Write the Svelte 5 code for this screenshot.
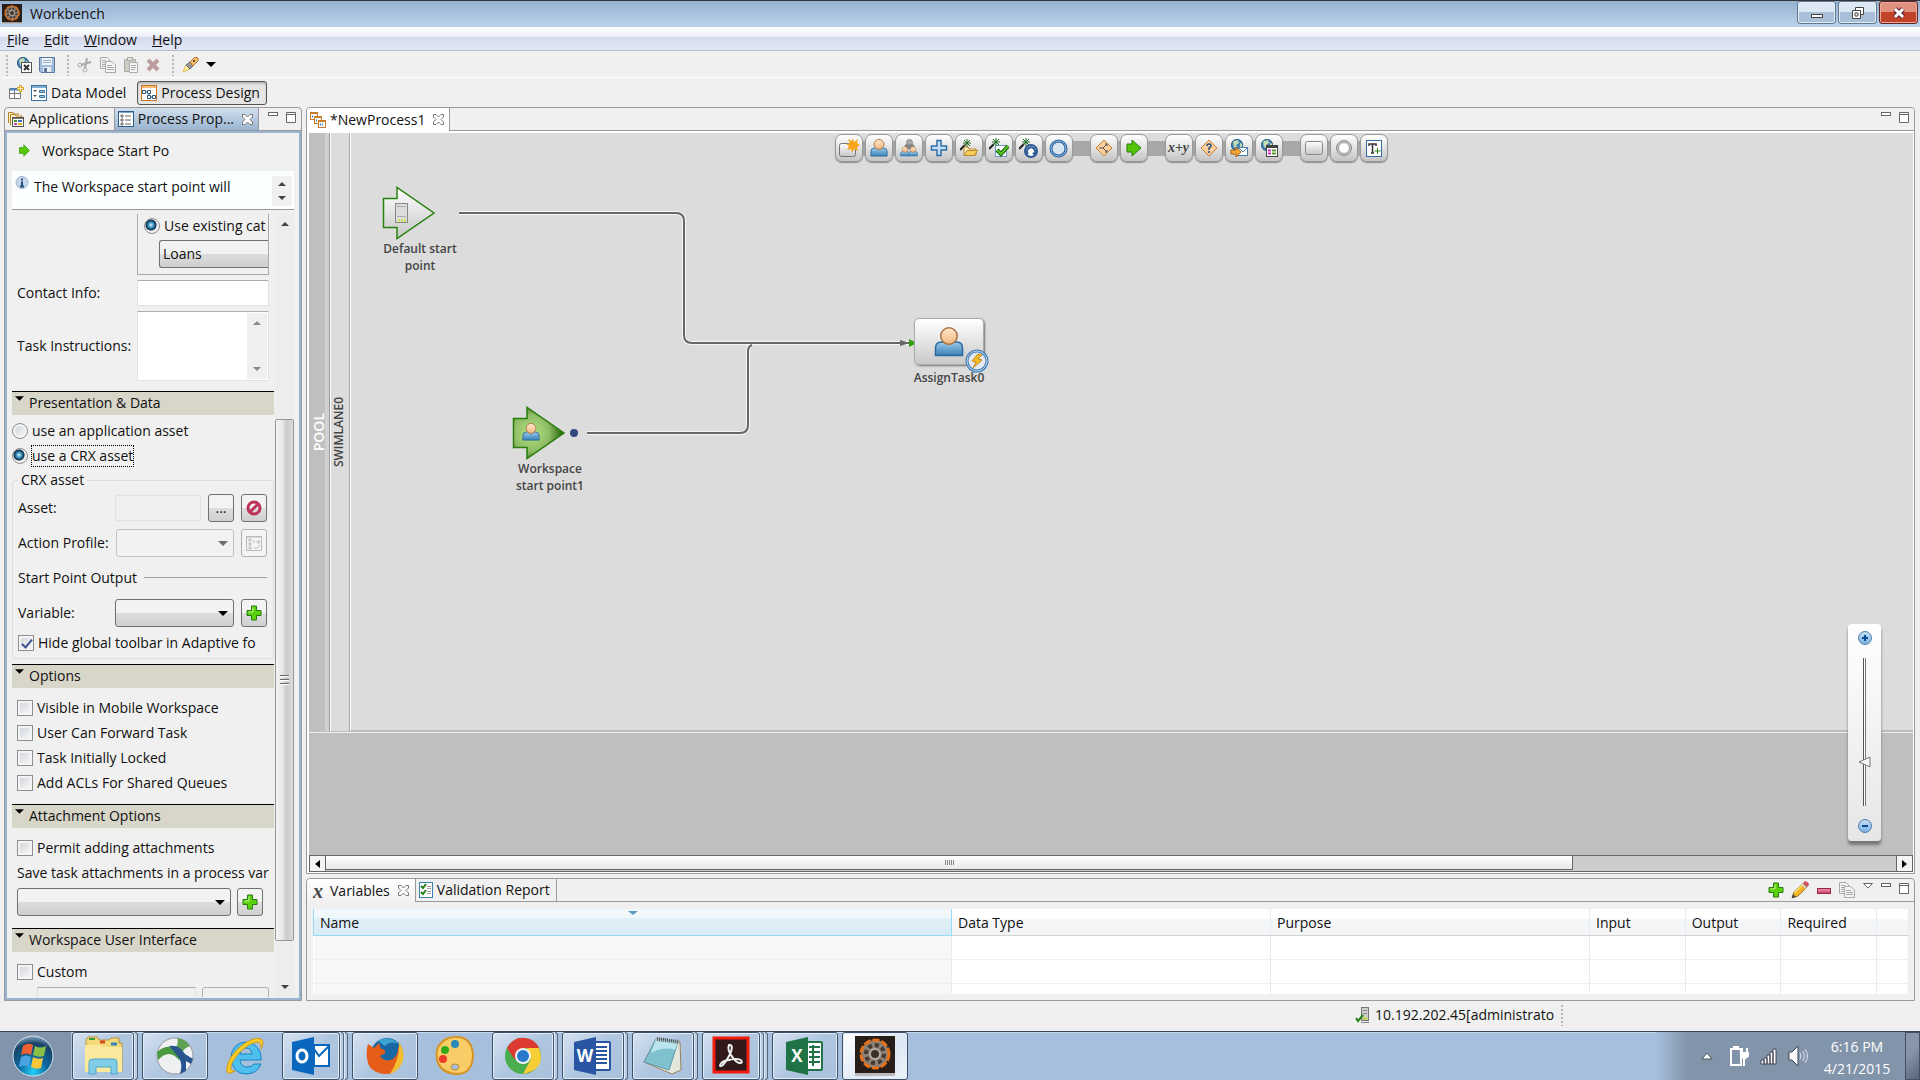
<script lang="ts">
  const menus = ['File', 'Edit', 'Window', 'Help'];

  const palette = [
    ['activity', 'user', 'users', 'plus', 'folder', 'check', 'cycle', 'ring'],
    ['route', 'go'],
    ['formula', 'question', 'globeMail', 'globeForm'],
    ['box', 'circle', 'text']
  ];

  let options = [
    { label: 'Visible in Mobile Workspace', checked: false },
    { label: 'User Can Forward Task', checked: false },
    { label: 'Task Initially Locked', checked: false },
    { label: 'Add ACLs For Shared Queues', checked: false }
  ];

  const columns = ['Name', 'Data Type', 'Purpose', 'Input', 'Output', 'Required', ''];

  const apps = [
    { name: 'Explorer', icon: 'explorer', framed: true, stack: 1 },
    { name: 'Connect', icon: 'connect', framed: true, stack: 0 },
    { name: 'Internet Explorer', icon: 'ie', framed: false, stack: 0 },
    { name: 'Outlook', icon: 'outlook', framed: true, stack: 2 },
    { name: 'Firefox', icon: 'firefox', framed: true, stack: 0 },
    { name: 'Paint', icon: 'paint', framed: false, stack: 0 },
    { name: 'Chrome', icon: 'chrome', framed: true, stack: 1 },
    { name: 'Word', icon: 'word', framed: true, stack: 1 },
    { name: 'Notepad', icon: 'notepad', framed: true, stack: 1 },
    { name: 'Acrobat', icon: 'acrobat', framed: true, stack: 2 },
    { name: 'Excel', icon: 'excel', framed: true, stack: 0 },
    { name: 'Workbench', icon: 'workbench', framed: true, stack: 0, active: true }
  ];

  let assetSource = 'crx';
  let hideToolbar = true;
  let permitAttachments = false;
  let custom = false;
  let contact = '';
  let instructions = '';
  let zoom = 28;
</script>

{#snippet globe()}
  <circle cx="7" cy="6" r="6" fill="#4c86b4" />
  <path d="M3 2 L8 1 L9 4 L6 6 L7 9 L4 8 Z M10 4 L13 5 L12 8 L10 8 Z" fill="#c5dfb4" />
  <circle cx="7" cy="6" r="5.5" fill="none" stroke="#2d608e" />
{/snippet}

{#snippet wand()}
  <path d="M0 11 L5 6" stroke="#222" stroke-width="2" />
  <path d="M7 0 V8 M3 4 H11 M4 1 L10 7 M10 1 L4 7" stroke="#1c6a1c" stroke-width="1" />
{/snippet}

{#snippet person()}
  <path d="M1 19 V14 Q1 10 5 10 H15 Q19 10 19 14 V19 Z" fill="url(#shirt)" stroke="#286a9f" />
  <circle cx="10" cy="6" r="5.5" fill="url(#skin)" stroke="#a97242" />
{/snippet}

{#snippet icon(name: string)}
  {#if name === 'activity'}
    <svg width="22" height="20" viewBox="0 0 22 20"><rect x="1.500" y="5.500" width="16" height="13" rx="2" fill="url(#silver)" stroke="#777" /><path d="M15 0 L16 4 L20 1 L19 5 L22 7 L19 9 L20 13 L16 11 L14 15 L13 11 L9 12 L11 8 L8 6 L12 5 L10 1 L14 3 Z" fill="#f8a51b" /></svg>
  {:else if name === 'user'}
    <svg width="18" height="18" viewBox="0 0 20 20">{@render person()}</svg>
  {:else if name === 'users'}
    <svg width="18" height="18" viewBox="0 0 36 36"><path d="M10 20 V14 Q10 11 14 11 H24 Q28 11 28 14 V20 Z" fill="#888" stroke="#555" /><circle cx="19" cy="7" r="6" fill="#aaa" stroke="#555" /><g transform="translate(0 15)">{@render person()}</g><g transform="translate(16 15)">{@render person()}</g></svg>
  {:else if name === 'plus'}
    <svg width="18" height="18" viewBox="0 0 18 18"><path d="M7 1.500 H11 V7 H16.500 V11 H11 V16.500 H7 V11 H1.500 V7 H7 Z" fill="#c5e0f6" stroke="#2c6fa8" stroke-width="1.500" /></svg>
  {:else if name === 'folder'}
    <svg width="18" height="18" viewBox="0 0 18 18">{@render wand()}<path d="M4 16 V8 H8 L9 10 H16 V16 Z" fill="#fff5c8" stroke="#b9872c" /><path d="M4 16.500 L7 11.500 H17.500 L14.500 16.500 Z" fill="#f8cf5c" stroke="#b9872c" /></svg>
  {:else if name === 'check'}
    <svg width="20" height="20" viewBox="0 0 20 20"><rect x="6.500" y="7.500" width="11" height="11" fill="#fff" stroke="#6e9cc9" />{@render wand()}<path d="M8 12 L12 16 L19 8" fill="none" stroke="#195c12" stroke-width="4" /><path d="M8 12 L12 16 L19 8" fill="none" stroke="#54c522" stroke-width="2" /></svg>
  {:else if name === 'cycle'}
    <svg width="20" height="21" viewBox="0 0 20 21">{@render wand()}<circle cx="12" cy="13" r="6" fill="#fff" stroke="#2a5995" stroke-width="2" /><path d="M9 16 A4 4 0 1 1 15 16" fill="none" stroke="#2a5995" stroke-width="2" /><path d="M13 15 L17 14 L16 18 Z" fill="#2a5995" /></svg>
  {:else if name === 'ring'}
    <svg width="19" height="19" viewBox="0 0 19 19"><circle cx="9.500" cy="9.500" r="7.500" fill="#d9e6f2" stroke="#255f9e" stroke-width="3" /><circle cx="9.500" cy="9.500" r="7.500" fill="none" stroke="#9dc4e9" /></svg>
  {:else if name === 'route'}
    <svg width="18" height="18" viewBox="0 0 18 18"><path d="M9 1 L17 9 L9 17 L1 9 Z" fill="#fbcf9d" stroke="#c9803b" /><path d="M4 9 H8 L12 5 M8 9 L12 13 M10 5 H12 V7 M10 13 H12 V11" fill="none" stroke="#555" /></svg>
  {:else if name === 'go'}
    <svg width="16" height="18" viewBox="0 0 16 18"><path d="M1 5 H6 V1 L15 9 L6 17 V13 H1 Z" fill="#54c40a" stroke="#277f0b" /></svg>
  {:else if name === 'formula'}
    <i class="formula">x+y</i>
  {:else if name === 'question'}
    <svg width="18" height="18" viewBox="0 0 18 18"><path d="M9 1 L17 9 L9 17 L1 9 Z" fill="#fbcf9d" stroke="#c9803b" /><path d="M7 7 Q7 5 9 5 Q11 5 11 7 Q11 8 9 9 V11" fill="none" stroke="#204e7c" stroke-width="1.500" /><circle cx="9" cy="13" r="1" fill="#204e7c" /></svg>
  {:else if name === 'globeMail'}
    <svg width="18" height="18" viewBox="0 0 18 18">{@render globe()}<rect x="8.500" y="8.500" width="9" height="8" fill="#fff" stroke="#4d7fac" /><path d="M9 9 L13 13 L17 9" fill="none" stroke="#4d7fac" /><path d="M1 11 H6 V8 L11 13 L6 18 V15 H1 Z" fill="#f9a63b" stroke="#a85c12" /></svg>
  {:else if name === 'globeForm'}
    <svg width="18" height="18" viewBox="0 0 18 18">{@render globe()}<rect x="6.500" y="6.500" width="11" height="11" fill="#fff" stroke="#444" /><path d="M7 8 H17" stroke="#444" stroke-width="2" /><path d="M8 11.500 H11 M8 14.500 H11" stroke="#c62abb" stroke-width="2" /><path d="M12 11.500 H16 M12 14.500 H16" stroke="#5a9c2c" stroke-width="2" /></svg>
  {:else if name === 'box'}
    <svg width="20" height="16" viewBox="0 0 20 16"><rect x="1.500" y="1.500" width="17" height="13" rx="2" fill="url(#silver)" stroke="#888" /></svg>
  {:else if name === 'circle'}
    <svg width="18" height="18" viewBox="0 0 18 18"><circle cx="9" cy="9" r="7.500" fill="#ccc" stroke="#888" /><circle cx="9" cy="9" r="5.500" fill="#fff" stroke="#999" /></svg>
  {:else if name === 'text'}
    <svg width="18" height="19" viewBox="0 0 18 19"><rect x="1.500" y="1.500" width="15" height="16" fill="#fff" stroke="#346ba3" /><path d="M4 7 V5 H11 V7 M7.500 5 V14 M6 14 H9" fill="none" stroke="#333" stroke-width="1.500" /><path d="M12.500 9 V15 M9.500 12 H15.500" stroke="#288319" /></svg>
  {:else if name === 'add'}
    <svg width="16" height="16" viewBox="0 0 16 16"><path d="M5.500 1 H10.500 V5.500 H15 V10.500 H10.500 V15 H5.500 V10.500 H1 V5.500 H5.500 Z" fill="#5bd00c" stroke="#257b0d" /><path d="M7 2.500 V7 H2.500" fill="none" stroke="#c4f48d" /></svg>
  {:else if name === 'forbid'}
    <svg width="16" height="16" viewBox="0 0 16 16"><circle cx="8" cy="8" r="6" fill="none" stroke="#bf3159" stroke-width="3" /><path d="M4 12 L12 4" stroke="#bf3159" stroke-width="3" /></svg>
  {:else if name === 'profile'}
    <svg width="16" height="16" viewBox="0 0 16 16" fill="none" stroke="#bbb"><path d="M.5 1.500 H15.500 V15.500 H.5 Z M0 2 H16 M3 4 H5 V6 H3 Z M3 8 H5 V10 H3 Z M3 12 H5 V14 H3 Z M8 5 V8 M10 7 H14 M12 5 L14 7 L12 9 M8 12 L10 14 L14 10" /></svg>
  {:else if name === 'pencil'}
    <svg width="18" height="18" viewBox="0 0 18 18"><path d="M1 17 L3 11 L12 2 L16 6 L7 15 Z" fill="#f6b829" stroke="#9b7428" /><path d="M3 11 L12 2 L13 3 L4 12 Z" fill="#ffe87a" /><path d="M12 2 L14 0 Q18 1 18 4 L16 6 Z" fill="#d55460" /><path d="M11 3 L15 7" stroke="#ccc" stroke-width="2" /><path d="M1 17 L2 13 L5 16 Z" fill="#444" /></svg>
  {:else if name === 'minus'}
    <svg width="16" height="16" viewBox="0 0 16 16"><rect x="1.500" y="6.500" width="13" height="5" fill="#d95679" stroke="#95294a" /><path d="M2 8 H14" stroke="#f0a7b8" /></svg>
  {:else if name === 'copy'}
    <svg width="16" height="16" viewBox="0 0 16 16" stroke="#a9a9a9" fill="#f4f4f4"><path d="M.5 .5 H7 L9.500 3 V11.500 H.5 Z M2 3.500 H6 M2 5.500 H7 M2 7.500 H5 M2 9.500 H5" /><path d="M5.500 4.500 H12 L15.500 8 V15.500 H5.500 Z M7 8.500 H12 M7 10.500 H14 M7 12.500 H14" /></svg>
  {:else if name === 'close'}
    <svg width="11" height="11" viewBox="0 0 11 11"><path d="M.5 .5 H3 L5.500 3 L8 .5 H10.500 V3 L8 5.500 L10.500 8 V10.500 H8 L5.500 8 L3 10.500 H.5 V8 L3 5.500 L.5 3 Z" fill="#fff" stroke="#777" /></svg>
  {:else if name === 'min'}
    <svg width="10" height="11" viewBox="0 0 10 11"><rect x=".5" y=".5" width="9" height="3" fill="#fff" stroke="#666" /></svg>
  {:else if name === 'max'}
    <svg width="10" height="11" viewBox="0 0 10 11"><path d="M.5 .5 H9.500 V10.500 H.5 Z M0 2.500 H10" fill="#fff" stroke="#666" /></svg>
  {:else if name === 'viewMenu'}
    <svg width="10" height="11" viewBox="0 0 10 11"><path d="M.5 .5 H9.500 L5 5 Z" fill="#fff" stroke="#666" /></svg>
  {:else if name === 'publish'}
    <svg width="16" height="16" viewBox="0 0 16 16">{@render globe()}<rect x="5.500" y="5.500" width="10" height="10" fill="#fff" stroke="#555" /><path d="M8 8 L13 13 M13 8 L8 13" stroke="#333" stroke-width="2" /></svg>
  {:else if name === 'save'}
    <svg width="16" height="16" viewBox="0 0 16 16"><path d="M.5 .5 H15.500 V15.500 H2 L.5 14 Z" fill="#9fb9d9" stroke="#58799f" /><rect x="3" y="1" width="10" height="7" fill="#edf3fa" /><path d="M4 3.500 H12 M4 5.500 H12" stroke="#9cb2c9" /><rect x="4" y="10" width="8" height="5" fill="#e9eef4" /><rect x="5" y="11" width="3" height="4" fill="#58799f" /></svg>
  {:else if name === 'cut'}
    <svg width="16" height="16" viewBox="0 0 16 16" fill="none" stroke="#aaa"><path d="M10 1 L8 11 M14 5 L4 8" stroke-width="2" /><circle cx="3" cy="8" r="2" /><circle cx="8" cy="13" r="2" /></svg>
  {:else if name === 'paste'}
    <svg width="16" height="16" viewBox="0 0 16 16" stroke="#aaa"><path d="M1.500 2.500 H12.500 V14.500 H1.500 Z" fill="#d2cdc3" /><rect x="4.500" y=".5" width="5" height="3" fill="#e5e5e5" /><path d="M6.500 5.500 H14.500 V15.500 H6.500 Z M8 8.500 H13 M8 10.500 H13 M8 12.500 H12" fill="#f5f5f5" /></svg>
  {:else if name === 'delete'}
    <svg width="14" height="14" viewBox="0 0 14 14"><path d="M2 2 L12 12 M12 2 L2 12" stroke="#bd9ea0" stroke-width="4" /></svg>
  {:else if name === 'torch'}
    <svg width="17" height="16" viewBox="0 0 17 16"><path d="M1 15 L4 8 L8 12 Z" fill="#fff4a0" stroke="#e4b949" /><path d="M4 8 L8 5 L11 9 L8 12 Z" fill="#999" stroke="#667" /><path d="M8 5 L13 0 L16 1 L16 4 L11 9 Z" fill="#f5bd69" stroke="#b27a36" /><circle cx="12" cy="4" r="1" fill="#333" /></svg>
  {:else if name === 'openPerspective'}
    <svg width="15" height="15" viewBox="0 0 15 15"><path d="M.5 3.500 H11.500 V13.500 H.5 Z M5.500 4 V13 M1 8.500 H11" fill="#fff" stroke="#777" /><path d="M1 4.500 H10" stroke="#4788c9" stroke-width="2" /><path d="M11.500 0 V7 M8 3.500 H15" stroke="#dba526" stroke-width="3" /><path d="M11.500 1 V6 M9 3.500 H14" stroke="#fff2b0" /></svg>
  {:else if name === 'dataModel'}
    <svg width="16" height="16" viewBox="0 0 16 16"><rect x=".5" y=".5" width="15" height="15" fill="#fff" stroke="#37719f" /><path d="M1 2 H15" stroke="#80afd2" stroke-width="2" /><path d="M2 5 H6 L4 7 Z M2 10 H6 L4 12 Z" fill="#555" /><path d="M8.500 5.500 H13.500 V7.500 H8.500 Z M8.500 10.500 H13.500 V12.500 H8.500 Z" fill="#a7cbe4" stroke="#34729e" /></svg>
  {:else if name === 'processDesign'}
    <svg width="16" height="16" viewBox="0 0 16 16"><rect x=".5" y=".5" width="15" height="15" fill="#fff" stroke="#c97724" /><path d="M1 2 H15" stroke="#f4bc75" stroke-width="2" /><path d="M1.500 5.500 H4.500 V8.500 H1.500 Z M6.500 5.500 H9.500 V8.500 H6.500 Z M6.500 10.500 H9.500 V13.500 H6.500 Z M11.500 10.500 H14.500 V13.500 H11.500 Z M4 7 H6 M8 9 V10 M10 12 H11" fill="none" stroke="#27577c" /></svg>
  {:else if name === 'applications'}
    <svg width="17" height="16" viewBox="0 0 17 16"><path d="M.5 12 V1.500 H5 L6 3 H11 M2.500 14 V3.500 H7 L8 5 H14 V7" fill="#fff3cc" stroke="#b98222" /><rect x="4.500" y="6.500" width="11" height="9" fill="#fff" stroke="#555" /><path d="M5 7.500 H15" stroke="#777" /><path d="M6 10 H9" stroke="#4c9b1c" stroke-width="2" /><path d="M10 10 H14" stroke="#3a6ec9" stroke-width="2" /><path d="M6 13 H9" stroke="#cb42a4" stroke-width="2" /><path d="M10 13 H14" stroke="#dfb420" stroke-width="2" /></svg>
  {:else if name === 'properties'}
    <svg width="16" height="16" viewBox="0 0 16 16"><rect x=".5" y=".5" width="15" height="15" fill="#fff" stroke="#315f8c" /><path d="M1 1.500 H15" stroke="#83aed1" /><path d="M3 4 H5 V6 H3 Z M3 8 H5 V10 H3 Z M3 12 H5 V14 H3 Z M7 5 H13 M7 9 H13 M7 13 H13" fill="none" stroke="#666" /></svg>
  {:else if name === 'process'}
    <svg width="16" height="16" viewBox="0 0 16 16" fill="#fff" stroke="#c77b26"><rect x=".5" y=".5" width="7" height="7" /><path d="M0 1.500 H8" /><rect x="4.500" y="4.500" width="7" height="7" /><path d="M4 5.500 H12" /><rect x="8.500" y="8.500" width="7" height="7" /><path d="M8 9.500 H16" /><path d="M2 4.500 H4 M6 8.500 H8 M10 12.500 H14" stroke="#3a7bb2" stroke-dasharray="1 1" stroke-width="2" /></svg>
  {:else if name === 'info'}
    <svg width="14" height="14" viewBox="0 0 14 14"><circle cx="7" cy="6.500" r="6" fill="#c6d8ee" stroke="#a4b4c8" /><path d="M7 5.500 V10 M7 2.500 V4.500 M5 10.500 H9" stroke="#25507f" stroke-width="2" /></svg>
  {:else if name === 'validation'}
    <svg width="14" height="16" viewBox="0 0 14 16"><rect x=".5" y=".5" width="13" height="15" fill="#fff" stroke="#3c80ae" /><path d="M2 4 L4 6 L7 2 M2 10 L4 12 L7 8" fill="none" stroke="#237d19" stroke-width="2" /><path d="M8 4.500 H12 M8 6.500 H12 M8 9.500 H12 M8 11.500 H12" stroke="#999" /></svg>
  {:else if name === 'server'}
    <svg width="15" height="16" viewBox="0 0 15 16"><rect x="6.500" y=".5" width="7" height="13" fill="#ccc" stroke="#777" /><path d="M8 3.500 H12 M8 6.500 H12 M6 15.500 H14" stroke="#888" /><path d="M8 11.500 H12" stroke="#b8da23" stroke-width="2" /><path d="M1 11 L3 14 L8 8" fill="none" stroke="#257d17" stroke-width="2" /></svg>
  {:else if name === 'workbench'}
    <svg viewBox="0 0 40 40"><rect width="40" height="37" fill="#281e19" /><rect y="37" width="40" height="3" fill="#bbb" /><circle cx="20" cy="18" r="14" fill="#8b8077" stroke="#e77018" stroke-width="3" stroke-dasharray="7 2" /><circle cx="20" cy="18" r="9" fill="none" stroke="#483a31" stroke-width="4" stroke-dasharray="4 3" /><circle cx="20" cy="18" r="5" fill="#393029" stroke="#b5aaa1" stroke-width="2" /></svg>
  {:else if name === 'explorer'}
    <svg viewBox="0 0 40 40"><path d="M3 35 V4 L5 1 H14 L16 4 H26 L28 2 H36 V7 H39 V35 Z" fill="#f4d979" stroke="#b9913d" /><path d="M6 3 H12" stroke="#399b38" stroke-width="2" /><path d="M17 6 H22" stroke="#d74525" stroke-width="3" /><path d="M28 8 H34" stroke="#3182c2" stroke-width="3" /><path d="M2 9 H17 L20 11 H39 V36 H2 Z" fill="#fbe99d" /><path d="M6 38 V26 Q6 23 10 23 H31 Q34 23 34 26 V38 H28 V31 H13 V38 Z" fill="#83cce6" stroke="#4ba6cc" /></svg>
  {:else if name === 'connect'}
    <svg viewBox="0 0 40 40"><circle cx="20" cy="20" r="18" fill="#eff0f1" stroke="#999" /><path d="M2 16 Q11 8 20 12 L28 20 L24 24 Q14 12 3 24 Z" fill="#4b9a40" /><path d="M22 2 Q31 3 35 10 Q29 12 27 17 L21 11 Q24 7 22 2 Z" fill="#5ea353" /><path d="M14 10 Q24 8 30 18 L38 23 L36 28 L31 25 V35 L25 38 Q28 28 24 22 Q18 14 14 10 Z" fill="#28548f" /></svg>
  {:else if name === 'ie'}
    <svg viewBox="0 0 40 40"><path d="M6 21 A14 14 0 0 1 36 21 V24 H15 Q16 31 22 31 Q27 31 29 28 H36 Q32 38 21 38 Q7 38 6 21 Z M15 18 H27 Q26 12 21 12 Q16 12 15 18 Z" fill="#4fc0ee" fill-rule="evenodd" stroke="#1684c1" /><path d="M10 35 Q0 41 2 31 Q4 20 16 10 Q29 0 36 3 Q40 5 36 13 Q37 6 32 6 Q24 7 14 17 Q4 29 6 33 Q7 36 10 35 Z" fill="#f7cc28" stroke="#d59816" /></svg>
  {:else if name === 'outlook'}
    <svg viewBox="0 0 40 40"><path d="M1 6 L23 1 V39 L1 34 Z" fill="#0968bd" /><ellipse cx="11" cy="20" rx="5" ry="6" fill="none" stroke="#fff" stroke-width="3" /><rect x="23" y="9" width="15" height="21" fill="#fff" stroke="#0968bd" stroke-width="2" /><path d="M23 13 L28 20 L38 10" fill="none" stroke="#0968bd" stroke-width="2" /></svg>
  {:else if name === 'firefox'}
    <svg viewBox="0 0 40 40"><circle cx="22" cy="18" r="16" fill="#1767a5" /><path d="M13 5 Q23 -1 34 8 Q25 4 20 10 Z" fill="#3fa4d2" /><path d="M3 8 L9 12 L14 7 L16 13 Q21 13 20 17 L15 20 Q20 27 28 23 Q34 18 33 10 L35 15 L34 6 Q41 18 36 28 Q30 39 19 38 Q3 36 2 22 Q1 14 3 8 Z" fill="#e55d17" /><path d="M34 6 Q42 19 36 29 Q31 36 25 38 Q35 23 34 6 Z" fill="#f4be34" /></svg>
  {:else if name === 'paint'}
    <svg viewBox="0 0 40 40"><path d="M20 1 Q36 0 38 18 Q38 37 23 38 Q8 38 3 27 Q0 18 3 11 Q9 1 20 1 Z" fill="#f8cc67" stroke="#d69426" stroke-width="2" /><ellipse cx="20" cy="31" rx="4" ry="3" fill="#a6bfdc" stroke="#c58b28" /><circle cx="10" cy="14" r="4" fill="#37a91b" /><circle cx="20" cy="8" r="4" fill="#268aba" /><circle cx="8" cy="23" r="4" fill="#ed3b28" /></svg>
  {:else if name === 'chrome'}
    <svg viewBox="0 0 40 40"><circle cx="20" cy="20" r="18" fill="#4aae4f" /><path d="M4 12 Q11 0 22 2 Q32 3 36 12 H20 L12 24 Z" fill="#dd3a32" /><path d="M36 12 Q44 33 20 38 L28 23 L24 12 Z" fill="#f7ce35" /><circle cx="20" cy="20" r="8" fill="#f3f3f3" /><circle cx="20" cy="20" r="6" fill="#2879cb" /></svg>
  {:else if name === 'word' || name === 'excel'}
    <svg viewBox="0 0 40 40"><rect x="20" y="6" width="17" height="28" rx="1" fill="#fff" stroke={name === 'word' ? '#2955a3' : '#207347'} stroke-width="2" /><path d={name === 'word' ? 'M22 11 H34 M22 15 H34 M22 19 H34 M22 23 H34 M22 27 H34' : 'M24 11 H35 M24 16 H35 M24 21 H35 M24 26 H35 M28 9 V30'} stroke={name === 'word' ? '#2955a3' : '#207347'} stroke-width="2" /><path d="M1 6 L23 1 V39 L1 34 Z" fill={name === 'word' ? '#2955a3' : '#207347'} /><text x="12" y="26" text-anchor="middle" fill="#fff" font-size="17" font-weight="700">{name === 'word' ? 'W' : 'X'}</text></svg>
  {:else if name === 'notepad'}
    <svg viewBox="0 0 40 40"><path d="M13 3 L37 6 L38 34 L29 38 L1 26 Z" fill="#e5e7dc" stroke="#96825c" /><path d="M13 3 L35 6 L26 34 L1 26 Z" fill="#7fc1cf" stroke="#5b9aa9" /><path d="M13 3 L35 6 L32 14 Q21 10 8 17 Z" fill="#bbe5ee" /><path d="M14 3 L36 6" stroke="#555" stroke-width="4" stroke-dasharray="1 1" /></svg>
  {:else if name === 'acrobat'}
    <svg viewBox="0 0 40 40"><rect x="3" y="2" width="34" height="34" fill="#31191a" stroke="#f21b0c" stroke-width="3" /><path d="M18 9 C24 8 20 19 12 29 C7 33 8 25 18 24 C28 21 33 25 30 27 C25 28 15 15 18 9 Z" fill="none" stroke="#eee" stroke-width="2" /></svg>
  {/if}
{/snippet}

{#snippet section(title: string)}
  <h2 class="section"><svg width="10" height="6" viewBox="0 0 10 6"><path d="M0 0 H10 L5 5 Z" /></svg>{title}</h2>
{/snippet}

<svelte:head><title>Workbench</title></svelte:head>

<svg class="defs" width="0" height="0" aria-hidden="true">
  <defs>
    <linearGradient id="shirt" x2="0" y2="1"><stop stop-color="#9dc9e8" /><stop offset="1" stop-color="#3981b8" /></linearGradient>
    <linearGradient id="skin" x2="0" y2="1"><stop stop-color="#ffe7c9" /><stop offset="1" stop-color="#f0b781" /></linearGradient>
    <linearGradient id="silver" x2="0" y2="1"><stop stop-color="#fff" /><stop offset="1" stop-color="#c6c6c6" /></linearGradient>
    <radialGradient id="green" cx=".35" cy=".5" r=".6"><stop stop-color="#b5e77e" /><stop offset=".6" stop-color="#8ebb66" /><stop offset="1" stop-color="#2e6b0e" /></radialGradient>
    <radialGradient id="orb" cx=".5" cy=".9" r=".9"><stop stop-color="#22d1fa" /><stop offset=".4" stop-color="#0f68a0" /><stop offset=".8" stop-color="#174366" /><stop offset="1" stop-color="#8eadc7" /></radialGradient>
  </defs>
</svg>

<div class="screen">
  <header class="titlebar">
    <span class="app-icon">{@render icon('workbench')}</span>
    <h1>Workbench</h1>
    <div class="window-buttons">
      <button aria-label="Minimize"><svg width="16" height="14" viewBox="0 0 16 14"><rect x="2.500" y="8.500" width="11" height="3" fill="#fff" stroke="#444" /></svg></button>
      <button aria-label="Restore"><svg width="16" height="14" viewBox="0 0 16 14" fill="#fff" stroke="#444"><path d="M5.500 1.500 H13.500 V8.500 H5.500 Z" /><path d="M2.500 4.500 H10.500 V12.500 H2.500 Z M5 7 H8 V10 H5 Z" /></svg></button>
      <button class="quit" aria-label="Close"><svg width="16" height="14" viewBox="0 0 16 14"><path d="M4 3 L12 11 M12 3 L4 11" stroke="#523" stroke-width="5" /><path d="M4 3 L12 11 M12 3 L4 11" stroke="#fff" stroke-width="3" /></svg></button>
    </div>
  </header>

  <nav class="menubar">
    {#each menus as menu}
      <button><u>{menu[0]}</u>{menu.slice(1)}</button>
    {/each}
  </nav>

  <div class="toolbar">
    <span class="handle"></span>
    <button aria-label="Logout">{@render icon('publish')}</button>
    <button aria-label="Save">{@render icon('save')}</button>
    <span class="handle"></span>
    <button aria-label="Cut">{@render icon('cut')}</button>
    <button aria-label="Copy">{@render icon('copy')}</button>
    <button aria-label="Paste">{@render icon('paste')}</button>
    <button aria-label="Delete">{@render icon('delete')}</button>
    <span class="handle"></span>
    <button aria-label="Search">{@render icon('torch')}</button>
    <button class="drop" aria-label="Search options"><svg width="10" height="6" viewBox="0 0 10 6"><path d="M0 0 H10 L5 5 Z" /></svg></button>
  </div>

  <div class="perspectives">
    <button aria-label="Open perspective">{@render icon('openPerspective')}</button>
    <button>{@render icon('dataModel')}Data Model</button>
    <button class="active">{@render icon('processDesign')}Process Design</button>
  </div>

  <main>
    <aside class="panel properties">
      <div class="tabs">
        <button class="tab">{@render icon('applications')}Applications</button>
        <button class="tab focused">{@render icon('properties')}Process Prop...<span class="close">{@render icon('close')}</span></button>
        <span class="view-buttons">{@render icon('min')}{@render icon('max')}</span>
      </div>
      <div class="body">
        <div class="heading">
          <svg width="13" height="13" viewBox="0 0 16 18"><path d="M1 5 H7 V1 L15 9 L7 17 V13 H1 Z" fill="#56c80a" stroke="#3e9a18" /></svg>
          <span>Workspace Start Po</span>
        </div>
        <div class="hint">
          {@render icon('info')}
          <p>The Workspace start point will</p>
          <span class="spin"><i class="up"></i><i class="down"></i></span>
        </div>
        <div class="scroller">
          <form class="form">
            <div class="category">
              <label><input type="radio" checked />Use existing cat</label>
              <select aria-label="Category"><option>Loans</option></select>
            </div>
            <div class="row contact">
              <label for="contact">Contact Info:</label>
              <input id="contact" type="text" bind:value={contact} />
            </div>
            <div class="row instructions">
              <label for="instructions">Task Instructions:</label>
              <div class="area">
                <textarea id="instructions" bind:value={instructions}></textarea>
                <span class="spin tall"><i class="up"></i><i class="down"></i></span>
              </div>
            </div>

            {@render section('Presentation & Data')}
            <div class="radios">
              <label><input type="radio" bind:group={assetSource} value="app" /><span>use an application asset</span></label>
              <label><input type="radio" bind:group={assetSource} value="crx" /><span class="focus">use a CRX asset</span></label>
            </div>
            <fieldset>
              <legend>CRX asset</legend>
              <div class="field">
                <label for="asset">Asset:</label>
                <input id="asset" type="text" disabled />
                <button type="button">...</button>
                <button type="button" aria-label="Clear asset">{@render icon('forbid')}</button>
              </div>
              <div class="field">
                <label for="profile">Action Profile:</label>
                <span class="pick off"><select id="profile" disabled></select></span>
                <button type="button" disabled aria-label="Edit profile">{@render icon('profile')}</button>
              </div>
              <div class="field divider"><span>Start Point Output</span><hr /></div>
              <div class="field">
                <label for="variable">Variable:</label>
                <span class="pick"><select id="variable"></select></span>
                <button type="button" aria-label="New variable">{@render icon('add')}</button>
              </div>
              <label class="check"><input type="checkbox" bind:checked={hideToolbar} />Hide global toolbar in Adaptive fo</label>
            </fieldset>

            {@render section('Options')}
            <div class="checks">
              {#each options as option}
                <label class="check"><input type="checkbox" bind:checked={option.checked} />{option.label}</label>
              {/each}
            </div>

            {@render section('Attachment Options')}
            <div class="checks attachments">
              <label class="check"><input type="checkbox" bind:checked={permitAttachments} />Permit adding attachments</label>
              <label class="save" for="save">Save task attachments in a process var</label>
              <div class="save-row">
                <span class="pick"><select id="save"></select></span>
                <button type="button" aria-label="New attachment variable">{@render icon('add')}</button>
              </div>
            </div>

            {@render section('Workspace User Interface')}
            <div class="checks">
              <label class="check"><input type="checkbox" bind:checked={custom} />Custom</label>
              <div class="custom-row">
                <input type="text" aria-label="Custom interface" disabled />
                <button type="button" disabled aria-label="Browse"></button>
              </div>
            </div>
          </form>
          <div class="vbar"><i class="up"></i><div class="thumb"><span></span></div><i class="down"></i></div>
        </div>
      </div>
    </aside>

    <div class="right">
      <section class="panel editor">
        <div class="tabs">
          <button class="tab selected">{@render icon('process')}*NewProcess1<span class="close">{@render icon('close')}</span></button>
          <span class="view-buttons">{@render icon('min')}{@render icon('max')}</span>
        </div>
        <div class="canvas">
          <div class="pool">
            <div class="pool-name"><span>POOL</span></div>
            <div class="lane-name"><span>SWIMLANE0</span></div>
            <div class="lane"></div>
          </div>

          <svg class="wires" width="640" height="340" viewBox="0 0 640 340" fill="none">
            <g stroke="#f6f6f6" stroke-width="4">
              <path d="M278 300 H431 Q439 300 439 292 V219 Q439 210 446 210" />
              <path d="M150 80 H367 Q375 80 375 88 V202 Q375 210 383 210 H600" />
            </g>
            <g stroke="#666" stroke-width="2">
              <path d="M278 300 H431 Q439 300 439 292 V219 Q439 213 443 212" />
              <path d="M150 80 H367 Q375 80 375 88 V202 Q375 210 383 210 H600" />
            </g>
            <path d="M591 207 L601 210 L591 213 Z" fill="#666" />
            <path d="M600 206 L608 210 L600 214 Z" fill="#2fa00c" />
            <circle cx="265" cy="300" r="4" fill="#35497f" />
          </svg>

          <div class="node start">
            <svg width="54" height="54" viewBox="0 0 54 54"><path d="M1.500 12.500 H15 V1.500 L52 27 L15 52.500 V41.500 H1.500 Z" fill="url(#silver)" stroke="#27820c" stroke-width="1.500" /><rect x="13.500" y="17.500" width="12" height="19" fill="#ddd" stroke="#888" /><path d="M15 20.500 H24 M15 30.500 H24" stroke="#aaa" /><path d="M16 34.500 H24" stroke="#c5e32a" stroke-width="2" stroke-dasharray="2 1" /></svg>
            <span>Default start point</span>
          </div>
          <div class="node workspace">
            <svg width="54" height="54" viewBox="0 0 54 54"><path d="M1.500 12.500 H15 V1.500 L52 27 L15 52.500 V41.500 H1.500 Z" fill="url(#green)" stroke="#297d0c" stroke-width="1.500" /><g transform="translate(10 17) scale(.9)">{@render person()}</g></svg>
            <span>Workspace start point1</span>
          </div>
          <div class="node assign">
            <div class="task"><svg width="30" height="30" viewBox="0 0 20 20">{@render person()}</svg></div>
            <svg class="badge" width="24" height="24" viewBox="0 0 24 24"><circle cx="12" cy="12" r="10" fill="#e4e9ee" stroke="#467eb4" stroke-width="3" /><circle cx="12" cy="12" r="10" fill="none" stroke="#b4d4ef" /><path d="M13 5 L7 12 L11 13 L8 19 L17 11 L13 10 L17 6 Z" fill="#f5bd24" stroke="#c9861c" /></svg>
            <span>AssignTask0</span>
          </div>

          <div class="palette">
            {#each palette as group}
              <div class="group">
                {#each group as tool}
                  <button aria-label={tool}>{@render icon(tool)}</button>
                {/each}
              </div>
            {/each}
          </div>

          <div class="zoom">
            <button aria-label="Zoom in"><svg width="10" height="10" viewBox="0 0 10 10"><path d="M5 2 V8 M2 5 H8" stroke="#074a98" stroke-width="2" /></svg></button>
            <input type="range" aria-label="Zoom" bind:value={zoom} />
            <button aria-label="Zoom out"><svg width="10" height="10" viewBox="0 0 10 10"><path d="M2 5 H8" stroke="#074a98" stroke-width="2" /></svg></button>
          </div>
        </div>
        <div class="hbar">
          <button aria-label="Scroll left"><svg width="5" height="8" viewBox="0 0 5 8"><path d="M5 0 V8 L0 4 Z" /></svg></button>
          <div class="track"><div class="thumb"><span></span></div></div>
          <button aria-label="Scroll right"><svg width="5" height="8" viewBox="0 0 5 8"><path d="M0 0 V8 L5 4 Z" /></svg></button>
        </div>
      </section>

      <section class="panel variables">
        <div class="tabs">
          <button class="tab selected"><i class="x">x</i>Variables<span class="close">{@render icon('close')}</span></button>
          <button class="tab">{@render icon('validation')}Validation Report</button>
          <div class="actions">
            <button aria-label="Add variable">{@render icon('add')}</button>
            <button aria-label="Edit variable">{@render icon('pencil')}</button>
            <button aria-label="Remove variable">{@render icon('minus')}</button>
            <button aria-label="Copy variable">{@render icon('copy')}</button>
          </div>
          <span class="view-buttons">{@render icon('viewMenu')}{@render icon('min')}{@render icon('max')}</span>
        </div>
        <div class="grid">
          <table>
            <thead>
              <tr>
                {#each columns as column}
                  <th>{column}</th>
                {/each}
              </tr>
            </thead>
            <tbody>
              {#each [0, 1, 2] as _}
                <tr>
                  {#each columns as _column}
                    <td></td>
                  {/each}
                </tr>
              {/each}
            </tbody>
          </table>
        </div>
      </section>
    </div>
  </main>

  <footer class="status">
    {@render icon('server')}
    <span class="host">10.192.202.45[administrato</span>
    <span class="handle"></span>
  </footer>

  <div class="taskbar">
    <button class="start-button" aria-label="Start">
      <svg width="44" height="44" viewBox="0 0 44 44"><circle cx="22" cy="22" r="20" fill="url(#orb)" stroke="#d3e3ee" stroke-width="1" /><path d="M12 12 Q17 8 22 11 L20 21 Q15 18 10 21 Z" fill="#ed6230" /><path d="M24 12 Q29 15 35 12 L33 22 Q27 24 22 21 Z" fill="#8ac249" /><path d="M10 23 Q15 20 20 23 L18 33 Q13 30 8 33 Z" fill="#4ba4e0" /><path d="M22 23 Q27 26 32 24 L30 34 Q25 36 20 33 Z" fill="#fac63b" /></svg>
    </button>
    <div class="apps">
      {#each apps as app}
        <div class="app" class:framed={app.framed} class:active={app.active}>
          <button aria-label={app.name}>{@render icon(app.icon)}</button>
          {#each Array(app.stack) as _}
            <span class="edge"></span>
          {/each}
        </div>
      {/each}
    </div>
    <div class="tray">
      <svg class="more" width="12" height="8" viewBox="0 0 12 8"><path d="M1 7 L6 1 L11 7 Z" fill="#fff" stroke="#455" /></svg>
      <svg width="22" height="22" viewBox="0 0 22 22" fill="#8294aa" stroke="#fff" stroke-width="2"><path d="M5 2 H11 M3 4 H13 V20 H3 Z" /><path d="M14 3 V8 M19 3 V8" /><path d="M13 8 H20 V11 L16 14 Z" fill="#fff" /><path d="M16 13 V21" /></svg>
      <svg width="18" height="18" viewBox="0 0 18 18" fill="#fff" stroke="#445" stroke-width="1"><path d="M1 13 H4 V17 H1 Z M4 11 H7 V17 H4 Z M7 8 H10 V17 H7 Z M10 5 H13 V17 H10 Z M13 2 H16 V17 H13 Z" /></svg>
      <svg width="21" height="22" viewBox="0 0 21 22"><path d="M1 7 H4 L10 1 V21 L4 15 H1 Z" fill="#fff" stroke="#445" /><path d="M12 8 Q14 11 12 14 M15 6 Q18 11 15 16 M17 4 Q22 11 17 18" fill="none" stroke="#dde5ee" /></svg>
      <time><span>6:16 PM</span><span>4/21/2015</span></time>
      <button class="peek" aria-label="Show desktop"></button>
    </div>
  </div>
</div>

<style>
  :global(body) {
    margin: 0;
    overflow: hidden;
  }

  .screen, .screen * {
    box-sizing: border-box;
  }

  .screen {
    display: flex;
    flex-direction: column;
    height: 100vh;
    background: #f0f0f0;
    color: #111;
    font: 14px/20px "Open Sans", "Noto Sans", sans-serif;
  }

  .defs {
    position: absolute;
  }

  svg {
    display: block;
    flex: none;
  }

  button, input, select, textarea {
    margin: 0;
    padding: 0;
    font: inherit;
    color: inherit;
  }

  button {
    border: 0;
    background: none;
    display: flex;
    align-items: center;
    justify-content: center;
  }

  .titlebar {
    display: flex;
    align-items: center;
    height: 27px;
    border-top: 1px solid #333;
    background: linear-gradient(#96b2d1, #bbd2ea);
  }

  .app-icon {
    width: 20px;
    margin: 0 8px 0 2px;
  }

  .app-icon :global(svg) {
    width: 20px;
    height: 20px;
  }

  h1 {
    flex: 1;
    margin: 0;
    font-size: 14px;
    font-weight: 400;
  }

  .window-buttons {
    display: flex;
    align-self: flex-start;
    gap: 2px;
    padding-right: 2px;
  }

  .window-buttons button {
    width: 39px;
    height: 23px;
    border: 1px solid #62788f;
    border-radius: 3px;
    background: linear-gradient(#dbe7f3 50%, #a9c0d8 50%);
    box-shadow: inset 0 0 0 1px #e3edf6;
  }

  .window-buttons .quit {
    border-color: #61231d;
    background: linear-gradient(#e0917f 50%, #c14328 50%);
    box-shadow: inset 0 0 0 1px #e8aa9c;
  }

  .menubar {
    display: flex;
    height: 24px;
    padding: 2px 0 0 7px;
    gap: 15px;
    border-bottom: 1px solid #b6bccc;
    background: linear-gradient(#fff, #eef1f9 40%, #d5dbed 45%, #e2e7f5);
  }

  .toolbar {
    display: flex;
    align-items: center;
    gap: 7px;
    height: 27px;
    margin-left: 2px;
    padding: 2px 0 0 4px;
    border-bottom: 1px solid #fff;
  }

  .toolbar .handle {
    margin-right: 1px;
  }

  .toolbar button + .handle {
    margin-left: 5px;
  }

  .handle {
    width: 2px;
    height: 21px;
    background: repeating-linear-gradient(#b5b5b5 0 2px, transparent 2px 4px);
  }

  .perspectives {
    display: flex;
    align-items: center;
    height: 29px;
    padding: 0 0 0 9px;
    gap: 7px;
  }

  .perspectives button {
    gap: 4px;
    height: 24px;
  }

  .perspectives .active {
    margin-left: 4px;
    padding: 0 6px 0 3px;
    border: 1px solid #555;
    border-radius: 3px;
    background: #e5e5e5;
    box-shadow: inset 0 2px 2px #bbb;
  }

  main {
    flex: 1;
    min-height: 0;
    display: flex;
    gap: 4px;
    padding: 0 5px 0 4px;
  }

  .panel {
    display: flex;
    flex-direction: column;
    border: 1px solid #9a9a9a;
    border-radius: 4px 4px 0 0;
  }

  .properties {
    width: 298px;
    flex: none;
  }

  .right {
    flex: 1;
    min-width: 0;
    display: flex;
    flex-direction: column;
    gap: 4px;
  }

  .tabs {
    display: flex;
    flex: none;
    height: 23px;
    border-bottom: 1px solid #9a9a9a;
  }

  .tab {
    height: 22px;
    gap: 4px;
    padding: 0 5px 0 3px;
    border-right: 1px solid #9a9a9a;
    white-space: nowrap;
  }

  .tab.focused {
    background: linear-gradient(#d3dfed, #99b4d1);
  }

  .tab.selected {
    height: 23px;
    background: #fff;
    border-radius: 4px 0 0 0;
  }

  .tab .close {
    margin-left: 4px;
  }

  .tab .x {
    width: 16px;
    font: italic bold 20px/20px "Liberation Serif", serif;
    color: #444;
  }

  .view-buttons {
    display: flex;
    gap: 8px;
    margin-left: auto;
    padding: 4px 5px 0 0;
  }

  .body {
    flex: 1;
    min-height: 0;
    display: flex;
    flex-direction: column;
    padding: 2px 5px 1px;
    border: 2px solid #99b4d1;
  }

  .heading {
    display: flex;
    align-items: center;
    gap: 11px;
    height: 36px;
    padding: 0 0 5px 6px;
  }

  .heading span {
    width: 130px;
    white-space: nowrap;
  }

  .hint {
    display: flex;
    flex: none;
    height: 39px;
    padding: 5px 2px 0 3px;
    gap: 5px;
    background: #fbffff;
    border-bottom: 1px solid #999;
    margin-bottom: 4px;
  }

  .hint p {
    flex: 1;
    margin: 1px 0 0;
  }

  .spin {
    display: flex;
    flex-direction: column;
    justify-content: space-between;
    align-items: center;
    width: 20px;
    height: 30px;
    padding: 6px 0;
    background: #f0f0f0;
  }

  .up, .down {
    width: 0;
    border: solid transparent;
    border-width: 0 4px;
  }

  .up {
    border-bottom: 4px solid #444;
  }

  .down {
    border-top: 4px solid #444;
  }

  .scroller {
    flex: 1;
    min-height: 0;
    display: flex;
    overflow: hidden;
  }

  .form {
    width: 262px;
    flex: none;
    height: 100%;
    overflow: hidden;
  }

  label {
    white-space: nowrap;
  }

  input[type="radio"], input[type="checkbox"] {
    appearance: none;
    flex: none;
    width: 16px;
    height: 16px;
    border: 1px solid #8e8f8f;
    background: linear-gradient(135deg, #cdd2d8, #fbfbfb);
    box-shadow: inset 0 0 0 2px #f4f4f4;
  }

  input[type="radio"] {
    border-radius: 50%;
  }

  input[type="radio"]:checked {
    background: radial-gradient(circle at 6px 6px, #d4f4ff 0, #2c86b0 3px, #0b2b49 5px, #eee 6px);
    box-shadow: none;
  }

  input[type="checkbox"]:checked {
    position: relative;
  }

  input[type="checkbox"]:checked::after {
    content: "";
    position: absolute;
    left: 5px;
    top: 1px;
    width: 4px;
    height: 9px;
    border: solid #3f5695;
    border-width: 0 2px 2px 0;
    transform: rotate(40deg);
  }

  input[type="text"], textarea {
    min-width: 0;
    height: 26px;
    border: 1px solid #e2e3ea;
    border-top-color: #abadb3;
    background: #fff;
    border-radius: 1px;
  }

  input[type="text"]:disabled {
    background: #f0f0f0;
    border-color: #dde1ea;
  }

  select {
    appearance: none;
    width: 100%;
    height: 28px;
    padding-left: 4px;
    border: 1px solid #707070;
    border-radius: 3px;
    background: linear-gradient(#f2f2f2 50%, #dcdcdc 50%, #cfcfcf);
  }

  select:disabled {
    border-color: #adb2b5;
    background: #f4f4f4;
  }

  .category {
    height: 61px;
    margin-left: 125px;
    width: 132px;
    padding-left: 6px;
    border: solid #aaa;
    border-width: 0 1px 1px;
  }

  .category label {
    display: flex;
    align-items: center;
    gap: 4px;
    height: 24px;
  }

  .category select {
    width: 109px;
    margin: 2px 0 0 15px;
    padding-left: 3px;
    border-right: 0;
    border-radius: 3px 0 0 3px;
  }

  .row {
    display: flex;
    align-items: center;
    padding-left: 5px;
  }

  .row label {
    width: 120px;
  }

  .contact {
    height: 36px;
  }

  .contact input {
    width: 132px;
  }

  .instructions {
    margin-bottom: 10px;
  }

  .area {
    display: flex;
    width: 132px;
    height: 70px;
    padding: 1px;
    border: 1px solid #e2e3ea;
    border-top-color: #abadb3;
    background: #fff;
  }

  .area textarea {
    flex: 1;
    height: 100%;
    border: 0;
    outline: 0;
    resize: none;
    background: none;
  }

  .spin.tall {
    height: 100%;
    padding: 8px 0;
  }

  .tall .up {
    border-bottom-color: #888;
  }

  .tall .down {
    border-top-color: #888;
  }

  .section {
    display: flex;
    gap: 5px;
    height: 24px;
    margin: 0;
    padding: 1px 0 0 3px;
    border-top: 1px solid #000;
    background: #d8d5c9;
    font-size: 14px;
    font-weight: 400;
  }

  .section svg {
    margin-top: 3px;
    width: 9px;
  }

  .radios {
    padding-top: 3px;
  }

  .radios label {
    display: flex;
    align-items: center;
    gap: 4px;
    height: 25px;
  }

  .focus {
    outline: 1px dotted #000;
  }

  fieldset {
    margin: 2px 0 5px;
    padding: 0 6px 3px 5px;
    border: 1px solid #d5dfe5;
    border-radius: 3px;
    min-width: 0;
  }

  legend {
    padding: 0 3px;
    height: 20px;
  }

  .field {
    display: flex;
    align-items: center;
    justify-content: flex-end;
    height: 35px;
    gap: 7px;
  }

  .field label {
    flex: 1;
  }

  .field input {
    width: 86px;
  }

  .field .pick {
    width: 119px;
  }

  .field button, .save-row button {
    width: 26px;
    height: 28px;
    border: 1px solid #707070;
    border-radius: 3px;
    background: linear-gradient(#f3f3f3 50%, #dedede 50%, #d0d0d0);
  }

  .field button:disabled {
    border-color: #adb2b5;
    background: #f4f4f4;
  }

  .divider hr {
    flex: 1;
    height: 1px;
    margin: 0;
    border: 0;
    background: #a0a0a0;
  }

  .pick {
    position: relative;
    height: 28px;
  }

  .pick::after {
    content: "";
    position: absolute;
    right: 6px;
    top: 12px;
    border: solid transparent;
    border-width: 5px 5px 0;
    border-top-color: #000;
  }

  .pick.off::after {
    border-top-color: #6d6d6d;
  }

  .check {
    display: flex;
    align-items: center;
    gap: 4px;
    height: 25px;
  }

  .checks {
    padding: 7px 5px 9px;
  }

  .attachments {
    padding-bottom: 12px;
  }

  .save {
    display: block;
    height: 25px;
    line-height: 25px;
  }

  .save-row {
    display: flex;
    gap: 6px;
    margin-top: 3px;
  }

  .save-row .pick {
    width: 214px;
  }

  .custom-row {
    display: flex;
    gap: 6px;
    padding: 3px 0 0 20px;
  }

  .custom-row input {
    flex: 1;
  }

  .custom-row input:disabled {
    border-top-color: #abadb3;
  }

  .custom-row button {
    width: 67px;
    height: 28px;
    border: 1px solid #adb2b5;
    border-radius: 3px;
  }

  .vbar {
    display: flex;
    flex-direction: column;
    align-items: center;
    flex: 1;
    margin-left: 1px;
    padding: 8px 0;
    background: #ededed;
  }

  .vbar .thumb {
    flex: none;
    display: flex;
    align-items: center;
    justify-content: center;
    width: 19px;
    height: 68%;
    margin: auto 0 44px;
    border: 1px solid #979797;
    border-radius: 2px;
    background: linear-gradient(90deg, #f4f4f4, #e6e6e6 40%, #c8cacc 60%, #dcdcdc);
  }

  .vbar .thumb span {
    width: 9px;
    height: 10px;
    background: repeating-linear-gradient(#666 0 1px, #fff 1px 2px, transparent 2px 4px);
  }

  .editor {
    flex: 1;
    min-height: 0;
    background: #fff;
  }

  .editor .tabs {
    background: #f0f0f0;
    border-radius: 4px 4px 0 0;
  }

  .canvas {
    position: relative;
    flex: 1;
    min-height: 0;
    overflow: hidden;
    margin: 2px 1px 0 2px;
    background: #bfbfbf;
  }

  .pool {
    display: flex;
    height: 600px;
    padding-bottom: 1px;
    border-bottom: 1px solid #eee;
  }

  .pool-name, .lane-name {
    display: flex;
    align-items: center;
    justify-content: center;
  }

  .pool-name span, .lane-name span {
    writing-mode: vertical-rl;
    transform: rotate(180deg);
    font-weight: 600;
  }

  .pool-name {
    width: 21px;
    border-right: 1px solid #999;
    box-shadow: inset -4px 0 #d0d0d0;
    color: #fff;
  }

  .lane-name {
    width: 20px;
    padding-right: 2px;
    border-left: 1px solid #fff;
    border-right: 1px solid #aaa;
    background: #dcdcdc;
    color: #444;
    font-size: 12px;
  }

  .lane {
    flex: 1;
    border-left: 1px solid #fff;
    border-bottom: 1px solid #bbb;
    background: #dcdcdc;
  }

  .wires {
    position: absolute;
    left: 0;
    top: 0;
  }

  .node {
    position: absolute;
    display: flex;
    flex-direction: column;
    color: #444;
    font-size: 12px;
    font-weight: 600;
    line-height: 17px;
    text-align: center;
  }

  .start {
    left: 73px;
    top: 53px;
    width: 76px;
  }

  .workspace {
    left: 203px;
    top: 273px;
    width: 76px;
  }

  .assign {
    left: 602px;
    top: 185px;
    width: 76px;
    align-items: center;
  }

  .task {
    display: flex;
    align-items: center;
    justify-content: center;
    width: 70px;
    height: 47px;
    margin-bottom: 4px;
    border: 1px solid #aaa;
    border-radius: 5px;
    background: linear-gradient(#fff, #c9c9c9);
    box-shadow: 1px 1px 2px #777;
  }

  .badge {
    position: absolute;
    left: 54px;
    top: 31px;
  }

  .palette {
    position: absolute;
    top: 1px;
    left: 0;
    right: 0;
    margin: 0 auto;
    width: max-content;
    display: flex;
    gap: 17px;
    background: linear-gradient(transparent 7px, #a8a8a8 7px 22px, transparent 22px);
  }

  .palette .group {
    display: flex;
    gap: 2px;
  }

  .palette button {
    width: 28px;
    height: 28px;
    border: 1px solid #999;
    border-radius: 7px;
    background: linear-gradient(#fff, #c4c4c4);
    box-shadow: 0 1px 1px #888;
  }

  .formula {
    font: italic bold 14px/20px "Liberation Serif", serif;
    color: #444;
  }

  .zoom {
    position: absolute;
    right: 32px;
    bottom: 14px;
    width: 33px;
    height: 217px;
    display: flex;
    flex-direction: column;
    align-items: center;
    padding: 7px 0 8px;
    border-radius: 4px;
    background: linear-gradient(#fff, #e6e6e6);
    box-shadow: 0 4px 3px #777;
  }

  .zoom button {
    width: 14px;
    height: 14px;
    border: 1px solid #4e7db0;
    border-radius: 50%;
    background: linear-gradient(#c4def4, #7fb1de);
  }

  .zoom input {
    appearance: none;
    writing-mode: vertical-lr;
    direction: rtl;
    width: 15px;
    height: 148px;
    margin: auto 0;
    background: linear-gradient(90deg, transparent 6px, #555 6px 7px, #fff 7px 8px, #777 8px 9px, transparent 9px);
  }

  .zoom input::-webkit-slider-thumb {
    appearance: none;
    width: 13px;
    height: 12px;
    background: url("data:image/svg+xml,%3Csvg xmlns='http://www.w3.org/2000/svg' width='13' height='12'%3E%3Cpath d='M1 6 L12 1 V11 Z' fill='%23f4f4f4' stroke='%23777'/%3E%3C/svg%3E") no-repeat;
  }

  .hbar {
    display: flex;
    flex: none;
    height: 17px;
    margin: 0 1px 1px 2px;
    border: 1px solid #666;
    background: #ccc;
  }

  .hbar button {
    width: 15px;
    background: #f3f3f3;
  }

  .hbar .track {
    flex: 1;
    border: solid #666;
    border-width: 0 1px;
  }

  .hbar .thumb {
    display: flex;
    align-items: center;
    justify-content: center;
    width: calc(80% - 9px);
    height: 14px;
    border-right: 1px solid #666;
    border-bottom: 1px solid #666;
    background: linear-gradient(#fff, #e8e8e8);
  }

  .hbar .thumb span {
    width: 9px;
    height: 5px;
    background: repeating-linear-gradient(90deg, #888 0 1px, transparent 1px 2px);
  }

  .variables {
    flex: none;
    height: 123px;
  }

  .variables .selected {
    background: linear-gradient(#fff, #f0f0f0);
  }

  .variables .tab {
    padding-right: 6px;
  }

  .actions {
    display: flex;
    gap: 7px;
    margin-left: auto;
    padding-right: 8px;
  }

  .actions + .view-buttons {
    margin-left: 0;
  }

  .grid {
    height: 85px;
    margin: 7px 5px 0 6px;
    overflow: hidden;
  }

  table {
    width: 100%;
    border-collapse: collapse;
    table-layout: fixed;
    background: #fff;
  }

  th, td {
    height: 24px;
    padding: 0 6px;
    border-right: 1px solid #e8ecf2;
    border-bottom: 1px solid #efeff2;
    text-align: left;
    font-weight: 400;
  }

  th {
    height: 26px;
    padding-top: 3px;
    border-bottom-color: #d5d5d5;
    background: linear-gradient(#fff 40%, #f6f7f9 40%, #f1f3f5);
  }

  th:first-child {
    position: relative;
    width: 40%;
    border: 1px solid #96d9f9;
    border-top: 0;
    background: linear-gradient(#f0f8fc 35%, #e0f0f8 35%, #d7ebf4);
  }

  th:first-child::after {
    content: "";
    position: absolute;
    left: 50%;
    top: 2px;
    margin-left: -5px;
    border: solid transparent;
    border-width: 4px 5px 0;
    border-top-color: #5c9cc0;
  }

  td:first-child {
    background: #f7f7f7;
  }

  th:nth-child(2), th:nth-child(3) {
    width: 20%;
  }

  th:nth-child(n + 4) {
    width: 6%;
  }

  th:last-child {
    width: 2%;
  }

  .status {
    display: flex;
    justify-content: flex-end;
    align-items: center;
    height: 30px;
    flex: none;
    gap: 5px;
    padding: 0 357px 2px 0;
  }

  .host {
    width: 176px;
    margin-right: 5px;
  }

  .taskbar {
    display: flex;
    flex: none;
    height: 49px;
    border-top: 1px solid #3a4654;
    background: #a6bfdc;
    box-shadow: inset 0 1px #c6d8ea;
  }

  .start-button {
    width: 71px;
    padding-right: 5px;
    background: #8294ab;
  }

  .apps {
    display: flex;
    flex: 1;
    gap: 4px;
    padding-left: 1px;
  }

  .app {
    display: flex;
    width: 66px;
  }

  .app button {
    flex: 1;
    border-radius: 3px;
  }

  .app :global(svg) {
    width: 40px;
    height: 40px;
  }

  .framed button {
    border: 1px solid #3e5168;
    box-shadow: inset 0 0 0 1px #e2edf8;
    background: linear-gradient(135deg, #d5e2f1, #b0c6e0 50%, #a9c0dc);
  }

  .active button {
    background: linear-gradient(135deg, #fff, #dce7f3 60%, #edf3fa);
  }

  .edge {
    width: 4px;
    border: 1px solid #56697f;
    border-left: 1px solid #dce8f5;
    border-radius: 0 3px 3px 0;
    background: #b8cbe2;
  }

  .tray {
    display: flex;
    align-items: center;
    gap: 10px;
    padding-left: 45px;
    background: linear-gradient(90deg, #a6bfdc, #8294aa 32px);
    color: #fff;
  }

  .tray .more {
    margin-right: 5px;
  }

  .tray time {
    display: flex;
    flex-direction: column;
    width: 76px;
    padding-top: 3px;
    line-height: 22px;
    text-align: center;
  }

  .peek {
    align-self: stretch;
    width: 15px;
    border: 1px solid #445263;
    background: linear-gradient(135deg, #8797a9 40%, #566678);
  }
</style>
